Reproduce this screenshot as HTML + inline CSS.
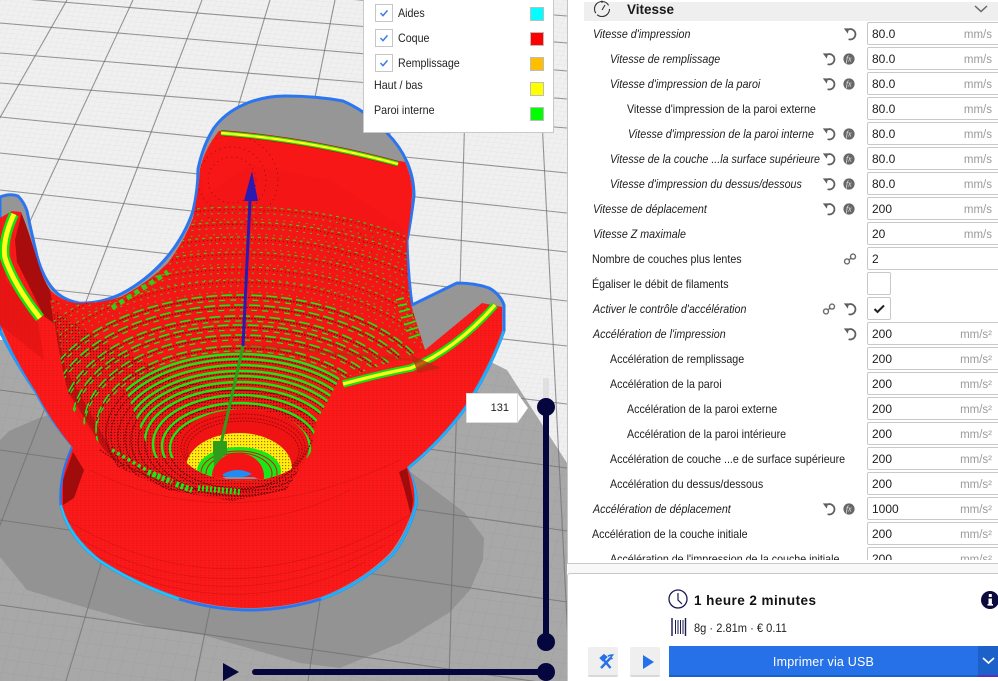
<!DOCTYPE html>
<html lang="fr">
<head>
<meta charset="utf-8">
<title>Vitesse</title>
<style>
html,body{margin:0;padding:0;background:#fff;width:998px;height:681px;overflow:hidden}
#w{position:absolute;left:0;top:0;width:998px;height:681px;overflow:hidden;font-family:"Liberation Sans",sans-serif;color:#1a1a1a}
svg.s{position:absolute;left:0;top:0}
.set{position:absolute;left:567px;top:0;width:431px;height:564px;background:#fff;border-left:1px solid #c4c4c4;border-bottom:1px solid #c8c8c8;box-sizing:border-box;overflow:hidden}
.gap{position:absolute;left:567px;top:564px;width:431px;height:9px;background:#f8f8f8}
.act{position:absolute;left:567px;top:573px;width:440px;height:112px;background:#fff;border:1px solid #c8c8c8;border-radius:3px;box-sizing:border-box}
.hd{position:absolute;left:584px;top:2px;width:414px;height:19px;background:#efefef}
.hdt{position:absolute;left:627px;top:2px;font:bold 13.5px/16px "Liberation Sans",sans-serif;color:#1a1a1a}
.l{position:absolute;font-size:12px;line-height:14px;white-space:nowrap;color:#1c1c1c;transform:scaleX(.89);transform-origin:0 50%}
.i{font-style:italic}
.c{position:absolute;top:0;left:0;width:998px;height:560px;overflow:hidden}
.b{position:absolute;left:867px;width:140px;height:23px;background:#fff;border:1px solid #c8c8c8;border-radius:2px;box-sizing:border-box}
.v{position:absolute;left:872px;font-size:12px;line-height:14px;color:#1c1c1c}
.u{position:absolute;right:14px;top:5px;font-size:11.5px;line-height:14px;color:#9a9a9a;text-align:right;width:50px}
.leg{position:absolute;left:363px;top:-3px;width:191px;height:136px;background:#fff;border:1px solid #c9c9c9;box-sizing:border-box}
.ll{position:absolute;font-size:12px;line-height:14px;color:#222;white-space:nowrap;transform:scaleX(.89);transform-origin:0 50%}
.cb{position:absolute;left:375px;width:18px;height:18px;border:1px solid #c6c6c6;box-sizing:border-box;background:#fff}
.sw{position:absolute;left:531px;width:12px;height:12px;border:1px solid #bdbdbd;box-sizing:content-box;margin:-1px}
.lab{position:absolute;left:466px;top:393px;width:52px;height:30px;background:#fff;border:1px solid #ddd;box-sizing:border-box;font-size:11px;line-height:28px;text-align:right;padding-right:8px;color:#222}
.btn{position:absolute;top:647px;width:30px;height:30px;background:#efefef;border-bottom:2px solid #d8d8d8;box-sizing:border-box;border-radius:2px}
.go{position:absolute;left:669px;top:646px;width:309px;height:31px;background:#2671e8;border-bottom:2px solid #1b5fc8;box-sizing:border-box;color:#fff;font-size:12.5px;line-height:32px;text-align:center;letter-spacing:.2px}
.go2{position:absolute;left:978px;top:646px;width:20px;height:31px;background:#1c60c9;border-bottom:2px solid #5a2fc0;box-sizing:border-box}
.t{position:absolute;left:694px;top:593px;font:bold 13.5px/16px "Liberation Sans",sans-serif;letter-spacing:.45px;color:#111;white-space:nowrap}
.m{position:absolute;left:694px;top:622px;font-size:11.5px;line-height:14px;color:#222;white-space:nowrap;transform:scaleX(.965);transform-origin:0 50%}
</style>
</head>
<body>
<div id="w">
<svg class="s" width="567" height="681" viewBox="0 0 567 681" xmlns="http://www.w3.org/2000/svg">
<defs>
<pattern id="fine" width="6" height="4.5" patternUnits="userSpaceOnUse" patternTransform="skewX(-20) skewY(5)"><path d="M0 0H6M0 0V4.5" stroke="#e2e2e2" stroke-width=".7" fill="none"/></pattern>
<pattern id="fine2" width="13" height="13" patternUnits="userSpaceOnUse" patternTransform="skewX(-15) skewY(7)"><path d="M0 0H13M0 0V13" stroke="#000" stroke-opacity=".05" stroke-width="1" fill="none"/></pattern>
<pattern id="st" width="3" height="3" patternUnits="userSpaceOnUse"><rect width="1.2" height="1.2" fill="#6a0505"/></pattern>
<pattern id="st2" width="4" height="2.5" patternUnits="userSpaceOnUse"><rect width="2" height=".8" fill="#a80d0d" opacity=".5"/></pattern>
<clipPath id="red"><path id="rp" d="M219 131 L405 162 Q413 180 412 196 Q410 220 407 241 Q406 275 411 305 L425 350 L482 303 L502 307 L502 331 Q490 365 464 407 Q440 440 407 467 Q416 485 414 505 Q405 535 389 554 Q360 582 321 597 Q285 608 250 608 Q215 608 179 597 Q135 582 100 559 Q70 535 62 505 Q60 475 73 448 Q50 420 36 392 Q15 360 0 324 L0 218 L12 211 L21 212 Q30 235 36 256 Q42 278 50 290 Q60 300 75 303 Q100 304 121 297 Q148 283 168 263 Q185 240 193 218 Q199 190 200 169 Q205 148 219 131 Z"/></clipPath>
<clipPath id="bowl"><path d="M54 324 L64 376 L73 410 L118 467 L168 490 L232 501 L286 490 L311 452 L316 422 L339 380 L425 350 L411 305 L407 241 L412 196 L405 162 L219 131 L200 169 L193 218 L168 263 L121 297 L75 303 L50 300 Z"/></clipPath>
<clipPath id="top"><path d="M108 344 L350 330 L322 458 L152 458 Z"/></clipPath>
<clipPath id="hole"><ellipse cx="243" cy="445" rx="65" ry="36"/></clipPath>
<g id="rings" fill="none">
<ellipse cx="240" cy="448" rx="70" ry="38"/><ellipse cx="240" cy="446" rx="78" ry="43"/><ellipse cx="240" cy="444" rx="87" ry="49"/><ellipse cx="240" cy="441" rx="95" ry="53"/><ellipse cx="240" cy="440" rx="102" ry="58"/><ellipse cx="240" cy="438" rx="109" ry="62"/><ellipse cx="240" cy="436" rx="115" ry="65"/><ellipse cx="240" cy="435" rx="122" ry="70"/><ellipse cx="240" cy="433" rx="129" ry="74"/><ellipse cx="240" cy="431" rx="134" ry="77"/>
</g>
<g id="ringsB" fill="none">
<ellipse cx="240" cy="429" rx="144" ry="83"/><ellipse cx="240" cy="425" rx="156" ry="90"/><ellipse cx="240" cy="423" rx="168" ry="98"/><ellipse cx="240" cy="420" rx="178" ry="104"/><ellipse cx="240" cy="417" rx="191" ry="112"/><ellipse cx="240" cy="414" rx="202" ry="119"/>
</g>
<g id="ringsC" fill="none">
<ellipse cx="240" cy="409" rx="220" ry="129"/><ellipse cx="240" cy="405" rx="234" ry="138"/><ellipse cx="240" cy="401" rx="252" ry="149"/><ellipse cx="240" cy="396" rx="269" ry="159"/><ellipse cx="240" cy="392" rx="286" ry="170"/><ellipse cx="240" cy="387" rx="303" ry="180"/>
</g>
</defs>

<!-- floor -->
<rect width="567" height="681" fill="#f0f0f0"/>
<rect width="567" height="681" fill="url(#fine)"/>
<path d="M0 340 L414 324 L507 370 L567 463 L567 681 L0 681 Z" fill="#a8a8a8"/>
<path d="M0 340 L414 324 L507 370 L567 463 L567 681 L0 681 Z" fill="url(#fine2)"/>
<!-- shadow -->
<path d="M0 440 L9 431 L39 418 L100 400 L404 467 L464 512 L484 538 L483 560 L470 590 L450 612 L400 643 L340 668 L300 663 L203 635 L153 627 L87 608 L27 590 L0 557 Z" fill="#939393"/>
<!-- major grid -->
<g stroke="#6f6f6f" stroke-opacity=".72" stroke-width="1.1" fill="none">
<path d="M0 -28L567 16M0 -3L567 43M0 23L567 71M0 53L567 99M0 83L567 128M0 117L567 173M0 153L567 213M0 190L567 252M0 234L567 301M0 284L567 346M0 335L567 404M0 390L567 468M0 450L567 531M0 520L567 602M0 605L567 686"/>
<path d="M67 0L-321 681M133 0L-184 681M202 0L-60 681M270 0L66 681M335 0L195 681M410 0L308 681M468 0L449 681M536 0L570 681"/>
</g>
<!-- object silhouette shadow & blue outline -->
<path id="ol" d="M198 169 Q203 145 214 128 Q225 113 243 105 Q262 96 286 96 Q316 96 343 101 Q368 112 387 133 Q400 146 407 162 Q414 178 414 196 Q411 220 407 241 Q408 275 412 305 L457 283 Q475 283 489 288 Q500 294 504 305 L504 331 Q490 370 464 410 Q440 442 407 469 Q417 487 416 505 Q408 535 393 554 Q362 584 321 599 Q285 610 250 610 Q215 610 179 599 Q135 584 100 561 Q68 537 61 505 Q59 475 73 446 Q50 420 36 392 Q15 362 0 331 L0 197 Q10 193 18 196 Q24 202 27 211 Q32 235 37 256 Q43 278 54 290 Q63 300 79 303 Q100 304 121 294 Q148 280 168 256 Q185 235 193 211 Q198 190 198 169 Z" fill="#969696" stroke="#2b76f0" stroke-width="3" stroke-linejoin="round"/>
<path d="M73 446 Q50 420 36 392 Q15 362 0 331" fill="none" stroke="#1e9dff" stroke-width="2.6"/>
<path d="M61 505 Q68 537 100 561 Q135 584 179 599" fill="none" stroke="#18c8ff" stroke-width="2.4"/>
<path d="M504 331 Q490 370 464 410 Q440 442 407 469 Q417 487 416 505 Q408 535 393 554 Q362 584 321 599" fill="none" stroke="#18b4ff" stroke-width="2.4"/>

<!-- red body -->
<use href="#rp" fill="#fb1919"/>
<g clip-path="url(#red)">
<rect x="0" y="100" width="520" height="520" fill="url(#st2)" opacity=".55"/>
<!-- darker parts -->
<path d="M22 212 L36 256 L50 290 L56 325 L44 316 L17 262 L15 240 Z" fill="#a80c0c"/>
<path d="M0 240 L6 280 L38 322 L44 360 L0 325 Z" fill="#d81212" opacity=".5"/>
<path d="M73 452 L63 480 L63 505 L74 498 L84 470 Z" fill="#a00c0c"/>
<path d="M399 472 L407 468 L413 500 L411 515 L405 492 Z" fill="#a00c0c"/>
<g clip-path="url(#bowl)">
<rect y="100" width="520" height="420" fill="#f41616"/>
<path d="M54 310 L62 378 L118 467 L168 490 L240 501 L290 488 L316 425 L300 395 L180 380 L100 340 Z" fill="url(#st)"/>
<path d="M52 305 L66 370 L118 462 L104 450 L64 385 Z" fill="#a80c0c" opacity=".65"/>
<!-- dark stipple rings -->
<g stroke="#5c0707" stroke-width="1.1" stroke-dasharray="1.5 1.5" transform="translate(0 2.4)">
<use href="#rings"/><use href="#ringsB"/>
</g>
<g stroke="#5c0707" stroke-width=".8" stroke-dasharray="1 3" transform="translate(0 2.5)">
<use href="#ringsC"/>
</g>
<!-- green rings: only top arcs, like the real layers -->
<g clip-path="url(#top)"><g stroke="#18e818" stroke-width="2.4"><use href="#rings"/></g></g>
<g stroke="#18e818" stroke-width="1.6" stroke-dasharray="11 4"><use href="#ringsB"/></g>
<g stroke="#18e818" stroke-width="1.2" stroke-dasharray="6 5" transform="translate(0 5)"><use href="#ringsB"/></g>
<g stroke="#18e818" stroke-width="1.1" stroke-dasharray="3 4" opacity=".9"><use href="#ringsC"/></g>
<g stroke="#18e818" stroke-width="1" stroke-dasharray="2 5" opacity=".85" transform="translate(0 6)"><use href="#ringsC"/></g>
<g stroke="#18e818" stroke-width="1" stroke-dasharray="1.5 6" opacity=".8" transform="translate(0 12)"><use href="#ringsC"/></g>
<path d="M396 300 L404 298M398 306 L407 304M399 312 L410 309M401 318 L413 315M404 325 L416 321M406 331 L419 327M409 338 L421 334" stroke="#18e818" stroke-width="1.8" fill="none"/>
</g>
<!-- solid upper rim washes -->
<path d="M219 131 L405 162 L412 196 L407 241 L400 225 L330 180 L250 165 L205 195 L200 169 Z" fill="#f81717" opacity=".82"/>
<!-- circles on wall -->
<g fill="none" stroke="#400" stroke-width=".7" stroke-dasharray="1 4" opacity=".7">
<ellipse cx="232" cy="180" rx="24" ry="23"/><ellipse cx="232" cy="180" rx="34" ry="33"/><ellipse cx="232" cy="180" rx="46" ry="44"/><ellipse cx="350" cy="242" rx="14" ry="13"/><ellipse cx="350" cy="242" rx="24" ry="22"/>
</g>
<!-- hole -->
<g clip-path="url(#hole)">
<rect x="170" y="400" width="150" height="90" fill="#ef1313"/>
<g fill="none" stroke="#920b0b" stroke-width="1" stroke-dasharray="1.6 1.4">
<ellipse cx="243" cy="447" rx="62" ry="33"/><ellipse cx="243" cy="449" rx="59" ry="31"/><ellipse cx="243" cy="451" rx="56" ry="30"/>
</g>
<ellipse cx="239" cy="468" rx="53" ry="35" fill="#ffee10"/>
<ellipse cx="239" cy="468" rx="53" ry="35" fill="url(#st)" opacity=".55"/>
<ellipse cx="239" cy="471" rx="42" ry="24" fill="#18e818"/>
<g fill="none" stroke="#e01010" stroke-width="1"><ellipse cx="239" cy="473" rx="38" ry="22"/><ellipse cx="239" cy="474" rx="33" ry="21"/></g>
<ellipse cx="238" cy="476" rx="26" ry="23" fill="#f41414"/>
<path d="M223 474 Q238 466 252 474 Q240 480 223 476 Z" fill="#1e8cf5"/>
<path d="M222 477 L254 477 L258 479 L226 479 Z" fill="#8f8f9f"/>
</g>
<!-- rim of hole -->
<path d="M100 450 Q165 495 240 490 Q295 485 312 440" fill="none" stroke="#7c0a0a" stroke-width="1.4" stroke-dasharray="1.5 1.5"/>
<path d="M176 484 L192 490 M148 472 L172 482" stroke="#18e818" stroke-width="6" stroke-dasharray="3 2" fill="none"/>
<path d="M112 450 L160 478" stroke="#18e818" stroke-width="3.5" stroke-dasharray="3 3" fill="none"/>
<path d="M112 308 L168 272" stroke="#18e818" stroke-width="5" stroke-dasharray="5 4" fill="none" opacity=".85"/>
<path d="M198 488 L240 492" stroke="#18e818" stroke-width="6" stroke-dasharray="2 2" fill="none"/>
<!-- base arcs -->
<g fill="none" stroke="#b10d0d" stroke-width=".6" opacity=".45">
<path d="M66 520 Q230 620 410 515M72 535 Q230 625 400 530M85 550 Q230 625 385 545M105 565 Q240 625 365 562"/>
<path d="M90 470 Q230 540 400 460M210 520 Q280 525 350 490"/>
</g>
</g>

<!-- yellow strips -->
<g fill="none" stroke-linecap="butt">
<path d="M221 133 Q310 140 398 164" stroke="#d01010" stroke-width="6"/>
<path d="M221 133 Q310 140 398 164" stroke="#14e214" stroke-width="4.6"/>
<path d="M221 133 Q310 140 398 164" stroke="#ffff18" stroke-width="2.4"/>
<path d="M14 214 Q2 240 5 258 Q14 285 40 318" stroke="#14e214" stroke-width="10"/>
<path d="M14 214 Q2 240 5 258 Q14 285 40 318" stroke="#ffff18" stroke-width="5"/>
<path d="M343 384 Q380 374 411 368 Q455 350 495 305" stroke="#14e214" stroke-width="7.5"/>
<path d="M343 384 Q380 374 411 368 Q455 350 495 305" stroke="#ffff18" stroke-width="3.4"/>
</g>

<!-- axes -->
<path d="M243 345 L414 360" stroke="#b52a12" stroke-width="2.5" opacity=".55"/>
<path d="M411 355 L441 368 L418 373 Z" fill="#b52a12" opacity=".75"/>
<path d="M243 346 L221 444" stroke="#2e9e1a" stroke-width="3"/>
<path d="M213 443 L227 452 L214 467 Z" fill="#2e9e1a"/><rect x="213" y="441" width="14" height="13" fill="#2e9e1a"/>
<path d="M243 346 L250 200" stroke="#2a1ab0" stroke-width="3"/>
<path d="M252 171 L258 201 L244 201 Z" fill="#2a1ab0"/>

<!-- sliders -->
<rect x="543" y="378" width="6" height="24" fill="#e0e0e0"/>
<rect x="543" y="407" width="6" height="235" fill="#06063f"/>
<circle cx="546" cy="407" r="9" fill="#06063f"/>
<circle cx="546" cy="642" r="9" fill="#06063f"/>
<rect x="252" y="669" width="294" height="6" rx="3" fill="#06063f"/>
<circle cx="546" cy="672" r="9" fill="#06063f"/>
<path d="M223 663 L239 672 L223 681 Z" fill="#06063f"/>
<path d="M518 394 L528 408 L518 422 Z" fill="#fff"/>
</svg>

<div class="lab">131</div>

<!-- legend -->
<div class="leg"></div>
<div class="cb" style="top:4px"></div><div class="cb" style="top:29px"></div><div class="cb" style="top:54px"></div>
<div class="ll" style="left:398px;top:6px">Aides</div>
<div class="ll" style="left:398px;top:31px">Coque</div>
<div class="ll" style="left:398px;top:56px">Remplissage</div>
<div class="ll" style="left:374px;top:78px">Haut / bas</div>
<div class="ll" style="left:374px;top:103px">Paroi interne</div>
<div class="sw" style="top:8px;background:#00ffff"></div>
<div class="sw" style="top:33px;background:#ff0000"></div>
<div class="sw" style="top:58px;background:#ffbf00"></div>
<div class="sw" style="top:83px;background:#ffff00"></div>
<div class="sw" style="top:108px;background:#00ff00"></div>

<!-- settings -->
<div class="set"></div>
<div class="gap"></div>
<div class="hd"></div>
<div class="hdt">Vitesse</div>

<div class="c">
<div class="l i" style="left:593px;top:27px">Vitesse d'impression</div>
<div class="l i" style="left:610px;top:52px">Vitesse de remplissage</div>
<div class="l i" style="left:610px;top:77px">Vitesse d'impression de la paroi</div>
<div class="l" style="left:627px;top:102px">Vitesse d'impression de la paroi externe</div>
<div class="l i" style="left:628px;top:127px">Vitesse d'impression de la paroi interne</div>
<div class="l i" style="left:610px;top:152px">Vitesse de la couche ...la surface supérieure</div>
<div class="l i" style="left:610px;top:177px">Vitesse d'impression du dessus/dessous</div>
<div class="l i" style="left:593px;top:202px">Vitesse de déplacement</div>
<div class="l i" style="left:593px;top:227px">Vitesse Z maximale</div>
<div class="l" style="left:592px;top:252px">Nombre de couches plus lentes</div>
<div class="l" style="left:592px;top:277px">Égaliser le débit de filaments</div>
<div class="l i" style="left:593px;top:302px">Activer le contrôle d'accélération</div>
<div class="l i" style="left:593px;top:327px">Accélération de l'impression</div>
<div class="l" style="left:610px;top:352px">Accélération de remplissage</div>
<div class="l" style="left:610px;top:377px">Accélération de la paroi</div>
<div class="l" style="left:627px;top:402px">Accélération de la paroi externe</div>
<div class="l" style="left:627px;top:427px">Accélération de la paroi intérieure</div>
<div class="l" style="left:610px;top:452px">Accélération de couche ...e de surface supérieure</div>
<div class="l" style="left:610px;top:477px">Accélération du dessus/dessous</div>
<div class="l i" style="left:593px;top:502px">Accélération de déplacement</div>
<div class="l" style="left:592px;top:527px">Accélération de la couche initiale</div>
<div class="l" style="left:610px;top:552px">Accélération de l'impression de la couche initiale</div>

<div class="b" style="top:22px"><span class="u">mm/s</span></div><div class="v" style="top:27px">80.0</div>
<div class="b" style="top:47px"><span class="u">mm/s</span></div><div class="v" style="top:52px">80.0</div>
<div class="b" style="top:72px"><span class="u">mm/s</span></div><div class="v" style="top:77px">80.0</div>
<div class="b" style="top:97px"><span class="u">mm/s</span></div><div class="v" style="top:102px">80.0</div>
<div class="b" style="top:122px"><span class="u">mm/s</span></div><div class="v" style="top:127px">80.0</div>
<div class="b" style="top:147px"><span class="u">mm/s</span></div><div class="v" style="top:152px">80.0</div>
<div class="b" style="top:172px"><span class="u">mm/s</span></div><div class="v" style="top:177px">80.0</div>
<div class="b" style="top:197px"><span class="u">mm/s</span></div><div class="v" style="top:202px">200</div>
<div class="b" style="top:222px"><span class="u">mm/s</span></div><div class="v" style="top:227px">20</div>
<div class="b" style="top:247px"></div><div class="v" style="top:252px">2</div>
<div class="b" style="top:272px;width:24px"></div>
<div class="b" style="top:297px;width:24px"></div>
<div class="b" style="top:322px"><span class="u">mm/s²</span></div><div class="v" style="top:327px">200</div>
<div class="b" style="top:347px"><span class="u">mm/s²</span></div><div class="v" style="top:352px">200</div>
<div class="b" style="top:372px"><span class="u">mm/s²</span></div><div class="v" style="top:377px">200</div>
<div class="b" style="top:397px"><span class="u">mm/s²</span></div><div class="v" style="top:402px">200</div>
<div class="b" style="top:422px"><span class="u">mm/s²</span></div><div class="v" style="top:427px">200</div>
<div class="b" style="top:447px"><span class="u">mm/s²</span></div><div class="v" style="top:452px">200</div>
<div class="b" style="top:472px"><span class="u">mm/s²</span></div><div class="v" style="top:477px">200</div>
<div class="b" style="top:497px"><span class="u">mm/s²</span></div><div class="v" style="top:502px">1000</div>
<div class="b" style="top:522px"><span class="u">mm/s²</span></div><div class="v" style="top:527px">200</div>
<div class="b" style="top:547px"><span class="u">mm/s²</span></div><div class="v" style="top:552px">200</div>
</div>

<!-- action panel -->
<div class="act"></div>
<div class="t">1 heure 2 minutes</div>
<div class="m">8g · 2.81m · € 0.11</div>
<div class="btn" style="left:588px"></div>
<div class="btn" style="left:630px"></div>
<div class="go">Imprimer via USB</div>
<div class="go2"></div>

<!-- icons overlay -->
<svg class="s" width="998" height="681" viewBox="0 0 998 681" xmlns="http://www.w3.org/2000/svg" style="pointer-events:none">
<defs>
<g id="r"><path d="M-3.6 -3.2 A5.2 5.2 0 1 1 -1.4 5.2" fill="none" stroke="#5f5f5f" stroke-width="1.8"/><path d="M-6.2 -5.6 L-1 -5.6 L-2.2 -0.4 Z" fill="#5f5f5f"/></g>
<g id="f"><circle r="5.6" fill="#676767"/><text x="-3.2" y="2.6" font-family="Liberation Serif,serif" font-style="italic" font-size="8" fill="#eee">fx</text></g>
<g id="k" fill="none" stroke="#6a6a6a" stroke-width="1.4"><circle cx="-3" cy="2.4" r="2.5"/><circle cx="3" cy="-2.4" r="2.5"/><path d="M-1.2 1 L1.2 -1"/></g>
<path id="ck" d="M-3.5 0 L-1 2.6 L3.5 -2.6" fill="none" stroke="#3d7bea" stroke-width="1.5"/>
</defs>
<use href="#ck" x="384" y="13"/><use href="#ck" x="384" y="38"/><use href="#ck" x="384" y="63"/>
<!-- gauge -->
<circle cx="602" cy="9" r="7.5" fill="#efefef" stroke="#333" stroke-width="1.1" stroke-dasharray="17 2 24"/>
<path d="M602 10 L605 5" stroke="#333" stroke-width="1.1"/><path d="M602 .5V3" stroke="#333"/>
<path d="M975 6 L981 11.5 L987 6" fill="none" stroke="#666" stroke-width="1.5"/>
<!-- row icons -->
<use href="#r" x="850" y="34"/>
<use href="#r" x="829" y="59"/><use href="#f" x="849" y="59"/>
<use href="#r" x="829" y="84"/><use href="#f" x="849" y="84"/>
<use href="#r" x="829" y="134"/><use href="#f" x="849" y="134"/>
<use href="#r" x="829" y="159"/><use href="#f" x="849" y="159"/>
<use href="#r" x="829" y="184"/><use href="#f" x="849" y="184"/>
<use href="#r" x="829" y="209"/><use href="#f" x="849" y="209"/>
<use href="#k" x="850" y="259"/>
<use href="#k" x="829" y="309"/><use href="#r" x="850" y="309"/>
<use href="#r" x="850" y="334"/>
<use href="#r" x="829" y="509"/><use href="#f" x="849" y="509"/>
<path d="M874.5 309 L877.5 312 L884 305.5" fill="none" stroke="#222" stroke-width="2"/>
<!-- clock -->
<circle cx="678" cy="599" r="9" fill="none" stroke="#1a1a50" stroke-width="1.3"/>
<path d="M678 593 V600 L682 604" fill="none" stroke="#1a1a50" stroke-width="1.2"/>
<!-- info -->
<circle cx="990" cy="600" r="9" fill="#0a0a3c"/>
<rect x="988.500" y="598.5" width="3.4" height="6.5" fill="#fff"/><rect x="987.5" y="604" width="5.5" height="1.6" fill="#fff"/><rect x="988.8" y="594" width="3" height="3" fill="#fff"/>
<!-- barcode -->
<path d="M675.5 620V634M678 620V634M680.500 620V634M683 620V634" stroke="#1a1a50" stroke-width="1"/>
<path d="M672 618V636M685.5 618V636" stroke="#1a1a50" stroke-width="1.4"/>
<!-- tools -->
<g fill="none" stroke="#2671e8">
<path d="M601 668 L610.500 658" stroke-width="2.4"/>
<path d="M610.500 668 L603 659" stroke-width="2.4"/>
<path d="M600 658 L604 654.500 L607 657 L603 661 Z" fill="#2671e8" stroke-width="1"/>
<path d="M608 656.500 Q609 655 612.500 655 L610.500 657.500 L612.500 659" stroke-width="1.6"/>
</g>
<path d="M643 655 L654 662 L643 669 Z" fill="#2671e8"/>
<path d="M983 658 L988.500 663 L994 658" fill="none" stroke="#fff" stroke-width="1.7"/>
</svg>
</div>
</body>
</html>
